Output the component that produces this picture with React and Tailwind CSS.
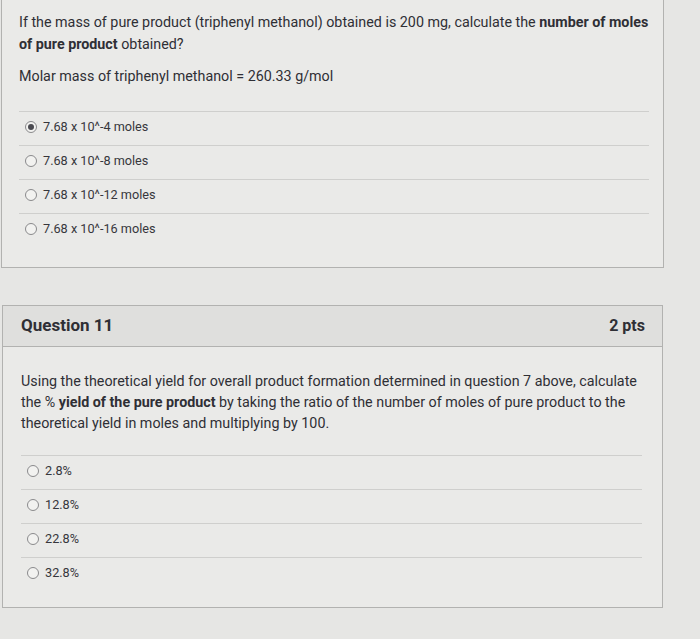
import React from "react";

const firstAnswers = [
  { label: "7.68 x 10^-4 moles", checked: true },
  { label: "7.68 x 10^-8 moles" },
  { label: "7.68 x 10^-12 moles" },
  { label: "7.68 x 10^-16 moles" },
];

const secondAnswers = [{ label: "2.8%" }, { label: "12.8%" }, { label: "22.8%" }, { label: "32.8%" }];

const Radio = ({ checked }) => (
  <span className="w-[12px] h-[12px] rounded-full border border-[#8a8a8c] bg-[#f2f2f0] flex items-center justify-center shrink-0">
    {checked && <span className="w-[6px] h-[6px] rounded-full bg-[#4a4a50]" />}
  </span>
);

const AnswerList = ({ answers }) => (
  <div>
    {answers.map((a) => (
      <div key={a.label} className="border-t border-[#cfcfcd] h-[34px] pt-[7px] flex items-start">
        <div className="flex items-center gap-[6px] ml-[6px] h-[16px]">
          <Radio checked={a.checked} />
          <span className="text-[12.7px] leading-[16px] text-[#37373c]">{a.label}</span>
        </div>
      </div>
    ))}
  </div>
);

export default function App() {
  return (
    <div className="w-[700px] h-[639px] overflow-hidden bg-[#e6e6e4] text-[#2f2f35]" style={{ fontFamily: "Roboto, 'Liberation Sans', sans-serif" }}>
      {/* previous question */}
      <div className="w-[663px] ml-[1px] border-l border-r border-b border-[#b2b2b0] bg-[#eaeae8] pl-[17px] pr-[14px] pt-[11px] pb-[20px]">
        <p className="text-[14.3px] leading-[22px]">
          If the mass of pure product (triphenyl methanol) obtained is 200 mg, calculate the{" "}
          <b className="font-bold">number of moles of pure product</b> obtained?
        </p>
        <p className="text-[14.3px] leading-[22px] mt-[10px]">Molar mass of triphenyl methanol = 260.33 g/mol</p>
        <div className="mt-[24px]">
          <AnswerList answers={firstAnswers} />
        </div>
      </div>

      {/* question 11 */}
      <div className="w-[661px] ml-[2px] mt-[37px] border border-[#b2b2b0] bg-[#eaeae8]">
        <div className="h-[41px] bg-[#dfdfdd] border-b border-[#b2b2b0] flex items-center justify-between pl-[18px] pr-[17px]">
          <span className="text-[17px] font-bold">Question 11</span>
          <span className="text-[16px] font-bold">2 pts</span>
        </div>
        <div className="pl-[18px] pr-[20px] pt-[24px] pb-[16px]">
          <p className="text-[14.3px] leading-[21px]">
            Using the theoretical yield for overall product formation determined in question 7 above, calculate the %{" "}
            <b className="font-bold">yield of the pure product</b> by taking the ratio of the number of moles of pure product to the
            theoretical yield in moles and multiplying by 100.
          </p>
          <div className="mt-[21px]">
            <AnswerList answers={secondAnswers} />
          </div>
        </div>
      </div>
    </div>
  );
}
